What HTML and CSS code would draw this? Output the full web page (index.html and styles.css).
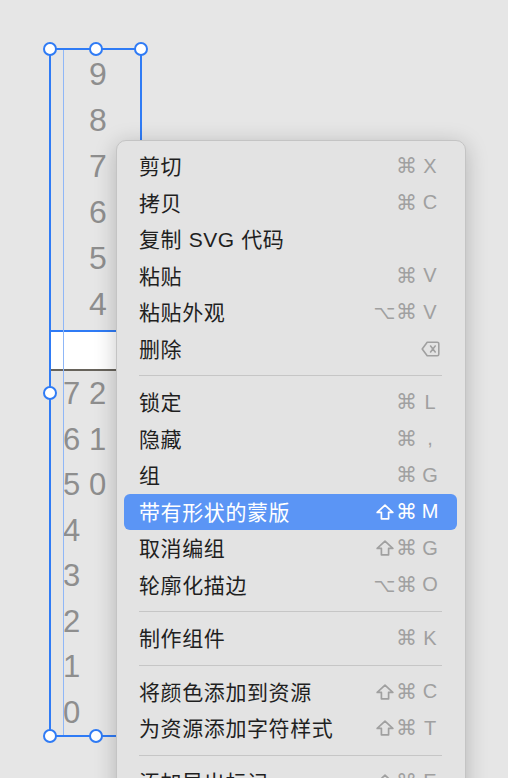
FILE: index.html
```html
<!DOCTYPE html>
<html lang="zh-CN">
<head>
<meta charset="utf-8">
<title>Context menu</title>
<link rel="stylesheet" href="styles.css">
</head>
<body>
<div class="canvas">
  <div class="sel">
    <div class="digits upper">
      <div class="drow"><span></span><span>9</span></div>
      <div class="drow"><span></span><span>8</span></div>
      <div class="drow"><span></span><span>7</span></div>
      <div class="drow"><span></span><span>6</span></div>
      <div class="drow"><span></span><span>5</span></div>
      <div class="drow"><span></span><span>4</span></div>
    </div>
    <div class="bar"></div>
    <div class="digits lower">
      <div class="drow"><span>7</span><span>2</span></div>
      <div class="drow"><span>6</span><span>1</span></div>
      <div class="drow"><span>5</span><span>0</span></div>
      <div class="drow"><span>4</span><span></span></div>
      <div class="drow"><span>3</span><span></span></div>
      <div class="drow"><span>2</span><span></span></div>
      <div class="drow"><span>1</span><span></span></div>
      <div class="drow"><span>0</span><span></span></div>
    </div>
    <span class="handle h-tl"></span>
    <span class="handle h-tm"></span>
    <span class="handle h-tr"></span>
    <span class="handle h-ml"></span>
    <span class="handle h-mr"></span>
    <span class="handle h-bl"></span>
    <span class="handle h-bm"></span>
    <span class="handle h-br"></span>
  </div>

  <div class="menu">
    <div class="item"><span class="label">剪切</span><span class="keys"><span class="mod"></span><span class="cmd">⌘</span><span class="key">X</span></span></div>
    <div class="item"><span class="label">拷贝</span><span class="keys"><span class="mod"></span><span class="cmd">⌘</span><span class="key">C</span></span></div>
    <div class="item"><span class="label">复制 SVG 代码</span><span class="keys"></span></div>
    <div class="item"><span class="label">粘贴</span><span class="keys"><span class="mod"></span><span class="cmd">⌘</span><span class="key">V</span></span></div>
    <div class="item"><span class="label">粘贴外观</span><span class="keys"><span class="mod">⌥</span><span class="cmd">⌘</span><span class="key">V</span></span></div>
    <div class="item"><span class="label">删除</span><span class="keys"><span class="mod"></span><span class="cmd"></span><span class="key"><svg class="ico del" viewBox="0 0 19 16" width="19" height="16"><path d="M6.2 1.2 H16.2 a1.6 1.6 0 0 1 1.6 1.6 V13.2 a1.6 1.6 0 0 1 -1.6 1.6 H6.2 L1.2 8 Z M9.6 5 L14.2 11 M14.2 5 L9.6 11"/></svg></span></span></div>
    <div class="sep"></div>
    <div class="item"><span class="label">锁定</span><span class="keys"><span class="mod"></span><span class="cmd">⌘</span><span class="key">L</span></span></div>
    <div class="item"><span class="label">隐藏</span><span class="keys"><span class="mod"></span><span class="cmd">⌘</span><span class="key">,</span></span></div>
    <div class="item"><span class="label">组</span><span class="keys"><span class="mod"></span><span class="cmd">⌘</span><span class="key">G</span></span></div>
    <div class="item active"><span class="label">带有形状的蒙版</span><span class="keys"><span class="mod"><svg class="ico" viewBox="0 0 18 16" width="18" height="16"><path d="M9 1.2 L16.8 8.4 H12.6 V14.8 H5.4 V8.4 H1.2 Z"/></svg></span><span class="cmd">⌘</span><span class="key">M</span></span></div>
    <div class="item"><span class="label">取消编组</span><span class="keys"><span class="mod"><svg class="ico" viewBox="0 0 18 16" width="18" height="16"><path d="M9 1.2 L16.8 8.4 H12.6 V14.8 H5.4 V8.4 H1.2 Z"/></svg></span><span class="cmd">⌘</span><span class="key">G</span></span></div>
    <div class="item"><span class="label">轮廓化描边</span><span class="keys"><span class="mod">⌥</span><span class="cmd">⌘</span><span class="key">O</span></span></div>
    <div class="sep"></div>
    <div class="item"><span class="label">制作组件</span><span class="keys"><span class="mod"></span><span class="cmd">⌘</span><span class="key">K</span></span></div>
    <div class="sep"></div>
    <div class="item"><span class="label">将颜色添加到资源</span><span class="keys"><span class="mod"><svg class="ico" viewBox="0 0 18 16" width="18" height="16"><path d="M9 1.2 L16.8 8.4 H12.6 V14.8 H5.4 V8.4 H1.2 Z"/></svg></span><span class="cmd">⌘</span><span class="key">C</span></span></div>
    <div class="item"><span class="label">为资源添加字符样式</span><span class="keys"><span class="mod"><svg class="ico" viewBox="0 0 18 16" width="18" height="16"><path d="M9 1.2 L16.8 8.4 H12.6 V14.8 H5.4 V8.4 H1.2 Z"/></svg></span><span class="cmd">⌘</span><span class="key">T</span></span></div>
    <div class="sep"></div>
    <div class="item"><span class="label">添加导出标记</span><span class="keys"><span class="mod"><svg class="ico" viewBox="0 0 18 16" width="18" height="16"><path d="M9 1.2 L16.8 8.4 H12.6 V14.8 H5.4 V8.4 H1.2 Z"/></svg></span><span class="cmd">⌘</span><span class="key">E</span></span></div>
  </div>
</div>
</body>
</html>
```

FILE: styles.css
```css
html, body {
  margin: 0;
  padding: 0;
  background: #e6e6e6;
}

.canvas {
  position: relative;
  width: 508px;
  height: 778px;
  overflow: hidden;
  background: #e6e6e6;
}

/* selection on the canvas */
.sel {
  position: absolute;
  left: 49px;
  top: 48px;
  width: 93px;
  height: 689px;
  box-sizing: border-box;
  border: 2px solid #2f7bf5;
}

.sel::before {
  content: "";
  position: absolute;
  left: 12px;
  top: 0;
  bottom: 0;
  width: 1px;
  background: #8fb7f7;
  z-index: 1;
}

.digits {
  font-family: "Liberation Sans", Arial, sans-serif;
  color: #8e8e8e;
  padding-left: 12px;
}

.upper {
  margin-top: 1px;
  font-size: 32px;
  line-height: 46px;
}

.lower {
  font-size: 31px;
  line-height: 45.5px;
}

.drow {
  display: grid;
  grid-template-columns: 26px 26px;
}

.bar {
  margin-top: 3px;
  height: 41px;
  box-sizing: border-box;
  background: #ffffff;
  border-top: 2px solid #2f7bf5;
  border-bottom: 2px solid #67635b;
  width: 120px;
}

.handle {
  position: absolute;
  width: 14px;
  height: 14px;
  box-sizing: border-box;
  border: 2px solid #2f7bf5;
  border-radius: 50%;
  background: #ffffff;
  transform: translate(-50%, -50%);
  z-index: 2;
}

.h-tl { left: -1px; top: -1px; }
.h-tm { left: 44.5px; top: -1px; }
.h-tr { left: 90px; top: -1px; }
.h-ml { left: -1px; top: 342.5px; }
.h-mr { left: 90px; top: 342.5px; }
.h-bl { left: -1px; top: 686px; }
.h-bm { left: 44.5px; top: 686px; }
.h-br { left: 90px; top: 686px; }

/* context menu */
.menu {
  position: absolute;
  left: 116px;
  top: 140px;
  width: 350px;
  height: 700px;
  box-sizing: border-box;
  padding: 7px 8px 0 7px;
  background: #e3e3e3;
  border: 1px solid #c4c4c4;
  border-radius: 10px;
  box-shadow: 0 4px 22px rgba(0, 0, 0, 0.22);
  z-index: 5;
  font-family: "Liberation Sans", "Noto Sans CJK SC", sans-serif;
}

.item {
  display: flex;
  align-items: center;
  justify-content: space-between;
  height: 36.5px;
  padding: 0 15px 0 15px;
  border-radius: 6px;
  color: #1f1f1f;
}

.label {
  font-size: 21px;
  letter-spacing: 0.6px;
  white-space: nowrap;
  padding-bottom: 2px;
}

.item.active {
  background: #5b95f5;
  color: #ffffff;
}

.keys {
  display: grid;
  grid-template-columns: 21px 23px 24px;
  align-items: center;
  color: #a0a0a0;
  font-size: 20px;
}

.item.active .keys {
  color: #ffffff;
}

.mod, .cmd {
  font-family: "DejaVu Sans", sans-serif;
  text-align: center;
  font-size: 19px;
  display: flex;
  justify-content: center;
  align-items: center;
}

.cmd {
  font-size: 21px;
}

.key {
  font-family: "Liberation Sans", Arial, sans-serif;
  text-align: center;
  display: flex;
  justify-content: center;
  align-items: center;
}

.ico {
  display: block;
  fill: none;
  stroke: currentColor;
  stroke-width: 1.7;
  stroke-linejoin: round;
  stroke-linecap: round;
}

.ico.del {
  stroke-width: 1.6;
}

.sep {
  height: 1px;
  margin: 8px 15px;
  background: #c6c6c6;
}
```
